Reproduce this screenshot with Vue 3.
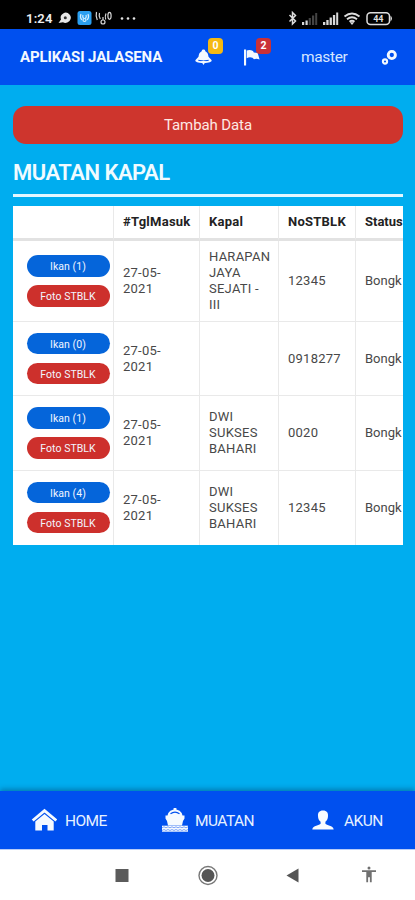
<script setup>
const rows = [
  { fish: 1, date: ['27-05-', '2021'], ship: ['HARAPAN', 'JAYA', 'SEJATI -', 'III'], no: '12345', size: 'tall' },
  { fish: 0, date: ['27-05-', '2021'], ship: [], no: '0918277', size: 'short' },
  { fish: 1, date: ['27-05-', '2021'], ship: ['DWI', 'SUKSES', 'BAHARI'], no: '0020', size: 'normal' },
  { fish: 4, date: ['27-05-', '2021'], ship: ['DWI', 'SUKSES', 'BAHARI'], no: '12345', size: 'normal' },
]
</script>

<template>
  <div class="screen">
    <div class="status">
      <span class="clock">1:24</span>
      <svg class="st-left" width="80" height="18" viewBox="0 0 80 18">
        <path d="M0.500 14l2.500-3.500A5 5 0 1 1 11.500 12Q8 15 5 13.300z" fill="#e8e8e8" />
        <circle cx="7.300" cy="8.800" r="1.500" fill="#333" />
        <rect x="19.500" y="2" width="14" height="14" rx="2.500" fill="#2b9ff0" />
        <g fill="none" stroke="#d5efff" stroke-width="1.200">
          <path d="M23 5q-1.500 3 .8 6M30 5q1.500 3-.8 6M25 6q-.8 2 .6 3.500M28 6q.8 2-.6 3.500" />
          <circle cx="26.500" cy="11" r="1.500" />
        </g>
        <g fill="none" stroke="#d8d8d8" stroke-width="1.200">
          <path d="M38.500 3q-1 4 .8 8M41.500 4q-1 3 .8 6M48 4.500q-1.300 3-.3 6" />
          <ellipse cx="51.500" cy="6.800" rx="1.600" ry="3.500" />
          <circle cx="45" cy="13" r="2" />
          <path d="M45 8v3" />
        </g>
        <g fill="#e4e4e4">
          <circle cx="64" cy="9.500" r="1.300" /><circle cx="70" cy="9.500" r="1.300" /><circle cx="76" cy="9.500" r="1.300" />
        </g>
      </svg>
      <svg class="st-right" width="108" height="18" viewBox="0 0 108 18">
        <path d="M2.500 6l6 6-3 3V3.500l3 3-6 6" fill="none" stroke="#ddd" stroke-width="1.500" />
        <g fill="#d8d8d8">
          <rect x="15" y="13" width="2.200" height="3" /><rect x="18.500" y="11.500" width="2.200" height="4.500" />
        </g>
        <g fill="#444">
          <rect x="21.700" y="9" width="2.200" height="7" /><rect x="25" y="6.500" width="2.200" height="9.500" /><rect x="28.200" y="4" width="2" height="12" />
        </g>
        <g fill="#d8d8d8">
          <rect x="36" y="13" width="2.300" height="3" /><rect x="39.300" y="11" width="2.300" height="5" /><rect x="42.600" y="8.500" width="2.300" height="7.500" /><rect x="45.900" y="6" width="2.300" height="10" /><rect x="49.200" y="3.500" width="2" height="12.500" />
        </g>
        <g fill="none" stroke="#ddd" stroke-width="1.900">
          <path d="M57.500 7.500q7.500-6 15 0M60 10.200q5-4 10 0M62.500 12.800q2.500-2 5 0" />
        </g>
        <path d="M62.800 13.200h4.400l-2.200 2.800z" fill="#ddd" />
        <rect x="80" y="3.800" width="22.500" height="11.600" rx="3.500" fill="none" stroke="#ddd" stroke-width="1.500" />
        <path d="M103.500 6.500q3 3 0 6z" fill="#ddd" />
        <text x="91.300" y="12.900" text-anchor="middle" class="battery">44</text>
      </svg>
    </div>

    <header class="topbar">
      <strong class="brand">APLIKASI JALASENA</strong>
      <span class="notice bell">
        <svg width="17" height="18" viewBox="0 0 17 18">
          <path d="M8.500 1.500c1.200 0 1.700.7 1.800 1.700 2.100 1 2.900 2.800 3.200 5.500l3 3.300c.7 1.300-1 3-8 3s-8.700-1.700-8-3l3-3.300c.3-2.700 1.100-4.500 3.200-5.500.1-1 .6-1.700 1.800-1.700z" fill="#f3f9ff" />
          <path d="M3.300 12.300q5.200 1.300 10.400 0" fill="none" stroke="#0050ef" stroke-width="1" />
          <path d="M6 13h5l-2.500 4z" fill="#f3f9ff" />
        </svg>
        <b class="badge yellow">0</b>
      </span>
      <span class="notice flag">
        <svg width="17" height="18" viewBox="0 0 17 18">
          <rect x="1" y="1.500" width="2.100" height="16" fill="#f3f9ff" />
          <path d="M3.700 2.500q3.300-1 6.300.5l.8 1.500 3.900.5 1.900 6.500q-3.300-1.500-5.600-.2L9.500 9.800Q6.500 8.600 3.700 10.300z" fill="#f3f9ff" />
        </svg>
        <b class="badge red">2</b>
      </span>
      <span class="user">master</span>
      <svg class="gears" width="17" height="18" viewBox="0 0 17 18">
        <circle cx="10.800" cy="7" r="3.600" fill="none" stroke="#f3f9ff" stroke-width="2.900" />
        <circle cx="4" cy="13.500" r="2.100" fill="none" stroke="#f3f9ff" stroke-width="2.100" />
      </svg>
    </header>

    <main class="content">
      <button class="add">Tambah Data</button>
      <h1>MUATAN KAPAL</h1>
      <div class="rule"></div>
      <div class="table-wrap">
        <table>
          <colgroup>
            <col class="c1" /><col class="c2" /><col class="c3" /><col class="c4" /><col class="c5" />
          </colgroup>
          <thead>
            <tr><th></th><th>#TglMasuk</th><th>Kapal</th><th>NoSTBLK</th><th>Status</th></tr>
          </thead>
          <tbody>
            <tr v-for="(r, i) in rows" :key="i" :class="r.size">
              <td>
                <div class="pills">
                  <span class="pill blue">Ikan ({{ r.fish }})</span>
                  <span class="pill crimson">Foto STBLK</span>
                </div>
              </td>
              <td><div v-for="d in r.date" :key="d">{{ d }}</div></td>
              <td><div v-for="s in r.ship" :key="s">{{ s }}</div></td>
              <td>{{ r.no }}</td>
              <td class="state">Bongk</td>
            </tr>
          </tbody>
        </table>
      </div>
    </main>

    <nav class="tabs">
      <span class="tab home">
        <svg width="26" height="24" viewBox="0 0 26 24">
          <path d="M1.700 12.500L13.500 2.600l11.800 9.900" fill="none" stroke="#f5faff" stroke-width="2.900" />
          <path d="M4.300 13.500L13.500 6l9.200 7.500V22.500h-6.200v-5.500h-5.500v5.500h-6.700z" fill="#f5faff" />
        </svg>
        <span>HOME</span>
      </span>
      <span class="tab cargo">
        <svg width="26" height="26" viewBox="0 0 26 26">
          <path d="M11.600 1h2.800v1.500q3.800.5 5.300 3.500l.8 2.500h2v3l-1.500 2.500-1 4.500H6l-1-4.500L3.500 11.500v-3h2L6.300 6q1.500-3 5.300-3.500z" fill="#f5faff" />
          <path d="M8.500 6.800q4.500-3.300 9 0" fill="none" stroke="#0050ef" stroke-width="1.200" />
          <rect x="0" y="18.700" width="26" height="6" fill="#f5faff" />
          <path d="M0 20.800l2-1 2 1 2-1 2 1 2-1 2 1 2-1 2 1 2-1 2 1 2-1 2 1 2-1M0 23.500l2-1 2 1 2-1 2 1 2-1 2 1 2-1 2 1 2-1 2 1 2-1 2 1 2-1" fill="none" stroke="#6f9af8" stroke-width=".9" />
        </svg>
        <span>MUATAN</span>
      </span>
      <span class="tab account">
        <svg width="22" height="22" viewBox="0 0 22 22">
          <path d="M11 1.500c3.800 0 5.200 2.300 5 5.500-.1 2.800-1 4.700-2.600 5.800v2c1 1.500 7.800 1.700 8.300 5.700H.3c.5-4 7.300-4.200 8.300-5.700v-2C7 11.700 6.100 9.800 6 7c-.2-3.200 1.200-5.500 5-5.500z" fill="#f8fcff" />
        </svg>
        <span>AKUN</span>
      </span>
    </nav>

    <div class="sysnav">
      <svg width="415" height="50" viewBox="0 0 415 50">
        <rect x="115.500" y="19" width="13" height="13" fill="#5b5b5b" />
        <circle cx="208" cy="25.500" r="9" fill="none" stroke="#777" stroke-width="1.400" />
        <circle cx="208" cy="25.500" r="6.500" fill="#555" />
        <path d="M286.500 25.500l12-7v14z" fill="#555" />
        <g fill="#707070">
          <circle cx="369" cy="18" r="1.500" />
          <path d="M362 20.300h14v1.600h-4.300v10.300h-1.800v-5h-1.800v5h-1.800V21.900H362z" />
        </g>
      </svg>
    </div>
  </div>
</template>

<style>
body { margin: 0; overflow: hidden; }
</style>

<style scoped>
.screen { width: 415px; height: 900px; display: flex; flex-direction: column; background: #00adef; font-family: Roboto, sans-serif; overflow: hidden; }
.status { height: 29px; background: #000; display: flex; align-items: flex-end; padding: 0 20px 2px 26px; box-sizing: border-box; flex: none; }
.clock { color: #eee; font-size: 13px; font-weight: 600; line-height: 17px; width: 32px; letter-spacing: .2px; }
.st-right { margin-left: auto; }
.battery { font: 700 9px Roboto, sans-serif; fill: #ddd; }
.topbar { height: 56px; flex: none; background: #0050ef; display: flex; align-items: center; padding: 0 17px 0 20px; box-sizing: border-box; color: #f3f9ff; }
.brand { font-size: 15px; font-weight: 700; width: 175px; white-space: nowrap; letter-spacing: -.13px; }
.notice { position: relative; width: 17px; height: 18px; }
.flag { margin-left: 31px; }
.user { font-size: 15.500px; margin-left: 41px; letter-spacing: -.35px; color: #d5e6ff; }
.gears { margin-left: auto; }
.badge { position: absolute; left: 13px; top: -10px; width: 15px; height: 16px; border-radius: 4px; text-align: center; font-size: 10.500px; line-height: 16px; color: #fff; }
.yellow { background: #f5b912; }
.red { background: #ca3037; }
.content { padding: 21px 12px 0 13px; flex: 1; }
.add { display: block; width: 100%; height: 38px; border: 0; border-radius: 13px; background: #ce352d; color: #fde9e4; font: 400 15px Roboto, sans-serif; letter-spacing: -.1px; padding: 0; }
h1 { margin: 15px 0 0; font-size: 22px; line-height: 28px; font-weight: 600; color: #f0fbff; letter-spacing: -.5px; }
.rule { height: 3px; background: #e2f7ff; margin-top: 7px; }
.table-wrap { margin-top: 9px; overflow: hidden; background: #fff; height: 339px; }
table { border-collapse: separate; border-spacing: 0; table-layout: fixed; width: 390px; color: #484848; font-size: 13px; line-height: 16px; letter-spacing: .25px; }
.c1 { width: 101px; } .c2 { width: 86px; } .c3 { width: 79px; } .c4 { width: 77px; } .c5 { width: 47px; }
th, td { box-sizing: border-box; padding: 0 0 0 9px; text-align: left; border-right: 1px solid #e9e9e9; border-bottom: 1px solid #e9e9e9; white-space: nowrap; }
th:last-child, td:last-child { border-right: 0; }
th { height: 35px; border-bottom: 3px solid #e2e2e2; color: #222; font-weight: 700; }
th:last-child, .state { letter-spacing: 0; }
.tall td { height: 81px; } .short td { height: 74px; } .normal td { height: 75px; }
tr:last-child td { border-bottom: 0; padding-bottom: 2px; }
.pills { display: flex; flex-direction: column; gap: 8.500px; margin-left: 4.500px; }
.pill { width: 83px; height: 21.500px; border-radius: 11px; color: #f2f5ff; font-size: 10.500px; line-height: 23.500px; text-align: center; letter-spacing: .05px; }
.blue { background: #0565da; }
.crimson { background: #cd302c; }
.tabs { height: 59px; flex: none; background: #0050ef; border-bottom: 1px solid #b8ccf8; box-sizing: border-box; box-shadow: 0 -2px 5px rgba(0, 50, 90, .4); display: flex; align-items: center; color: #e6f0ff; font-size: 15.500px; letter-spacing: -.55px; padding-left: 31px; }
.tab { display: flex; align-items: center; line-height: 20px; }
.tab span { padding-top: 1px; }
.home { gap: 8px; width: 131px; }
.cargo { gap: 7px; width: 150px; }
.account { gap: 10px; }
.sysnav { height: 50px; background: #fff; flex: none; }
</style>
